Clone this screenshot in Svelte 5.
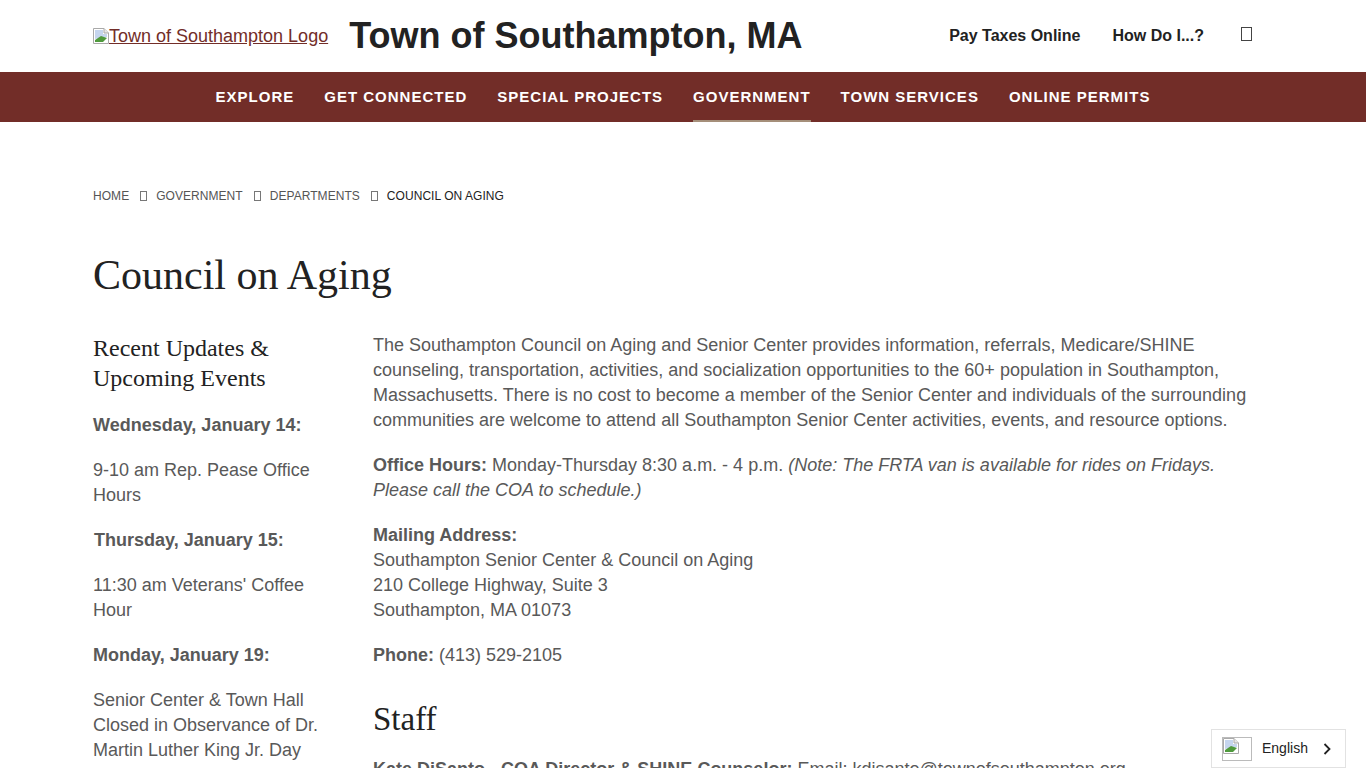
<script>
  const nav = ['Explore', 'Get Connected', 'Special Projects', 'Government', 'Town Services', 'Online Permits'];
  const crumbs = ['Home', 'Government', 'Departments'];
</script>

<div class="page">
  <header class="top">
    <div class="brand">
      <a class="logo" href="#home">
        <svg class="broken" width="16" height="16" viewBox="0 0 16 16" aria-hidden="true">
          <path d="M0.5 0.5H11L15.5 5V15.5H0.5Z" fill="#fff" stroke="#a9a9a9" />
          <path d="M11 0.5V5H15.5" fill="#e8e8e8" stroke="#a9a9a9" />
          <path d="M2 2H10V6H14V9L2 11Z" fill="#c5d5ee" />
          <path d="M2 14V12L8 8L14 10V14Z" fill="#4f9a3d" />
          <path d="M9 15L15 9V15Z" fill="#fff" />
        </svg>Town of Southampton Logo
      </a>
      <h1>Town of Southampton, MA</h1>
    </div>
    <div class="tools">
      <a href="#taxes">Pay Taxes Online</a>
      <a href="#how">How Do I...?</a>
      <span class="tofu search"></span>
    </div>
  </header>

  <nav class="mainnav">
    {#each nav as item}
      <a href="#nav" class:active={item === 'Government'}>{item}</a>
    {/each}
  </nav>

  <main class="wrap">
    <div class="crumbs">
      {#each crumbs as c}
        <a href="#crumb">{c}</a>
        <span class="tofu"></span>
      {/each}
      <span class="current">Council on Aging</span>
    </div>

    <h2 class="title">Council on Aging</h2>

    <div class="columns">
      <aside>
        <h3>Recent Updates &amp; Upcoming Events</h3>
        <p><strong>Wednesday, January 14:</strong></p>
        <p>9-10 am Rep. Pease Office Hours</p>
        <p class="nudge"><strong>Thursday, January 15:</strong></p>
        <p>11:30 am Veterans' Coffee Hour</p>
        <p><strong>Monday, January 19:</strong></p>
        <p>Senior Center &amp; Town Hall Closed in Observance of Dr. Martin Luther King Jr. Day</p>
      </aside>

      <section>
        <p>The Southampton Council on Aging and Senior Center provides information, referrals, Medicare/SHINE counseling, transportation, activities, and socialization opportunities to the 60+ population in Southampton, Massachusetts. There is no cost to become a member of the Senior Center and individuals of the surrounding communities are welcome to attend all Southampton Senior Center activities, events, and resource options.</p>
        <p><strong>Office Hours:</strong> Monday-Thursday 8:30 a.m. - 4 p.m. <em>(Note: The FRTA van is available for rides on Fridays. Please call the COA to schedule.)</em></p>
        <p><strong>Mailing Address:</strong><br />Southampton Senior Center &amp; Council on Aging<br />210 College Highway, Suite 3<br />Southampton, MA 01073</p>
        <p><strong>Phone:</strong> (413) 529-2105</p>
        <h2 class="sub">Staff</h2>
        <p><strong>Kate DiSanto - COA Director &amp; SHINE Counselor:</strong> Email: kdisanto@townofsouthampton.org</p>
      </section>
    </div>
  </main>

  <div class="translate">
    <span class="flag">
      <svg width="16" height="16" viewBox="0 0 16 16" aria-hidden="true">
        <path d="M0.5 0.5H11L15.5 5V15.5H0.5Z" fill="#fff" stroke="#a9a9a9" />
        <path d="M11 0.5V5H15.5" fill="#e8e8e8" stroke="#a9a9a9" />
        <path d="M2 2H10V6H14V9L2 11Z" fill="#c5d5ee" />
        <path d="M2 14V12L8 8L14 10V14Z" fill="#4f9a3d" />
        <path d="M9 15L15 9V15Z" fill="#fff" />
      </svg>
    </span>
    <span class="lang">English</span>
    <svg class="chev" width="10" height="12" viewBox="0 0 10 12" aria-hidden="true">
      <path d="M2.5 1L7.5 6L2.5 11" fill="none" stroke="#222" stroke-width="1.8" />
    </svg>
  </div>
</div>

<style>
  :global(html), :global(body) {
    margin: 0;
    background: #fff;
  }
  .page {
    position: relative;
    height: 768px;
    overflow: hidden;
    font-family: "Liberation Sans", Arial, sans-serif;
    font-size: 18px;
    line-height: 25px;
    color: #595959;
  }
  .top {
    height: 72px;
    width: 1160px;
    margin-left: 93px;
    display: flex;
    align-items: center;
    justify-content: space-between;
  }
  .brand {
    display: flex;
    align-items: center;
    gap: 21px;
  }
  .logo {
    color: #722d28;
    text-decoration: underline;
    white-space: nowrap;
  }
  .broken {
    vertical-align: -2px;
  }
  h1 {
    margin: 0;
    font-size: 36px;
    line-height: 42px;
    font-weight: 700;
    color: #222;
  }
  .tools {
    display: flex;
    align-items: center;
    gap: 32px;
    margin-top: -2px;
  }
  .tools a {
    font-size: 16px;
    font-weight: 700;
    color: #222;
    text-decoration: none;
  }
  .tofu {
    display: inline-block;
    box-sizing: border-box;
    width: 7px;
    height: 10px;
    border: 1px solid #777;
  }
  .search {
    width: 11px;
    height: 14px;
    margin: -3px 1px 0 5px;
    border-color: #444;
  }
  .mainnav {
    height: 50px;
    background: #722d28;
    display: flex;
    justify-content: center;
    gap: 30px;
  }
  .mainnav a {
    box-sizing: border-box;
    height: 50px;
    line-height: 49px;
    color: #fff;
    font-size: 15px;
    font-weight: 700;
    letter-spacing: 1px;
    text-transform: uppercase;
    text-decoration: none;
  }
  .mainnav a.active {
    border-bottom: 2px solid #a58f7a;
  }
  .wrap {
    width: 1160px;
    margin-left: 93px;
  }
  .crumbs {
    margin-top: 63px;
    height: 22px;
    display: flex;
    align-items: center;
    gap: 10px;
    font-size: 12px;
    letter-spacing: 0.05px;
    text-transform: uppercase;
  }
  .crumbs a {
    color: #555;
    text-decoration: none;
  }
  .crumbs .tofu {
    margin-left: 1px;
    margin-right: -1px;
  }
  .current {
    color: #222;
  }
  h2, h3 {
    font-family: "Liberation Serif", "Times New Roman", serif;
    font-weight: 400;
    color: #222;
    margin: 0;
  }
  .title {
    margin-top: 44px;
    font-size: 42px;
    line-height: 48px;
  }
  .columns {
    margin-top: 34px;
    display: grid;
    grid-template-columns: 240px 880px;
    gap: 40px;
  }
  h3 {
    font-size: 24px;
    line-height: 30px;
    margin-bottom: 20px;
  }
  p {
    margin: 0 0 20px;
  }
  .nudge {
    padding-left: 1px;
  }
  .sub {
    font-size: 33px;
    line-height: 38px;
    margin: 32px 0 19px;
  }
  .translate {
    position: absolute;
    left: 1211px;
    top: 729px;
    width: 135px;
    height: 39px;
    box-sizing: border-box;
    background: #fff;
    border: 1px solid #e2e2e2;
    display: flex;
    align-items: center;
    font-size: 14px;
    color: #222;
  }
  .flag {
    box-sizing: border-box;
    width: 30px;
    height: 24px;
    margin-left: 10px;
    border: 1px solid #bbb;
    display: flex;
    align-items: flex-start;
  }
  .lang {
    margin-left: 10px;
  }
  .chev {
    margin-left: 14px;
  }
</style>
